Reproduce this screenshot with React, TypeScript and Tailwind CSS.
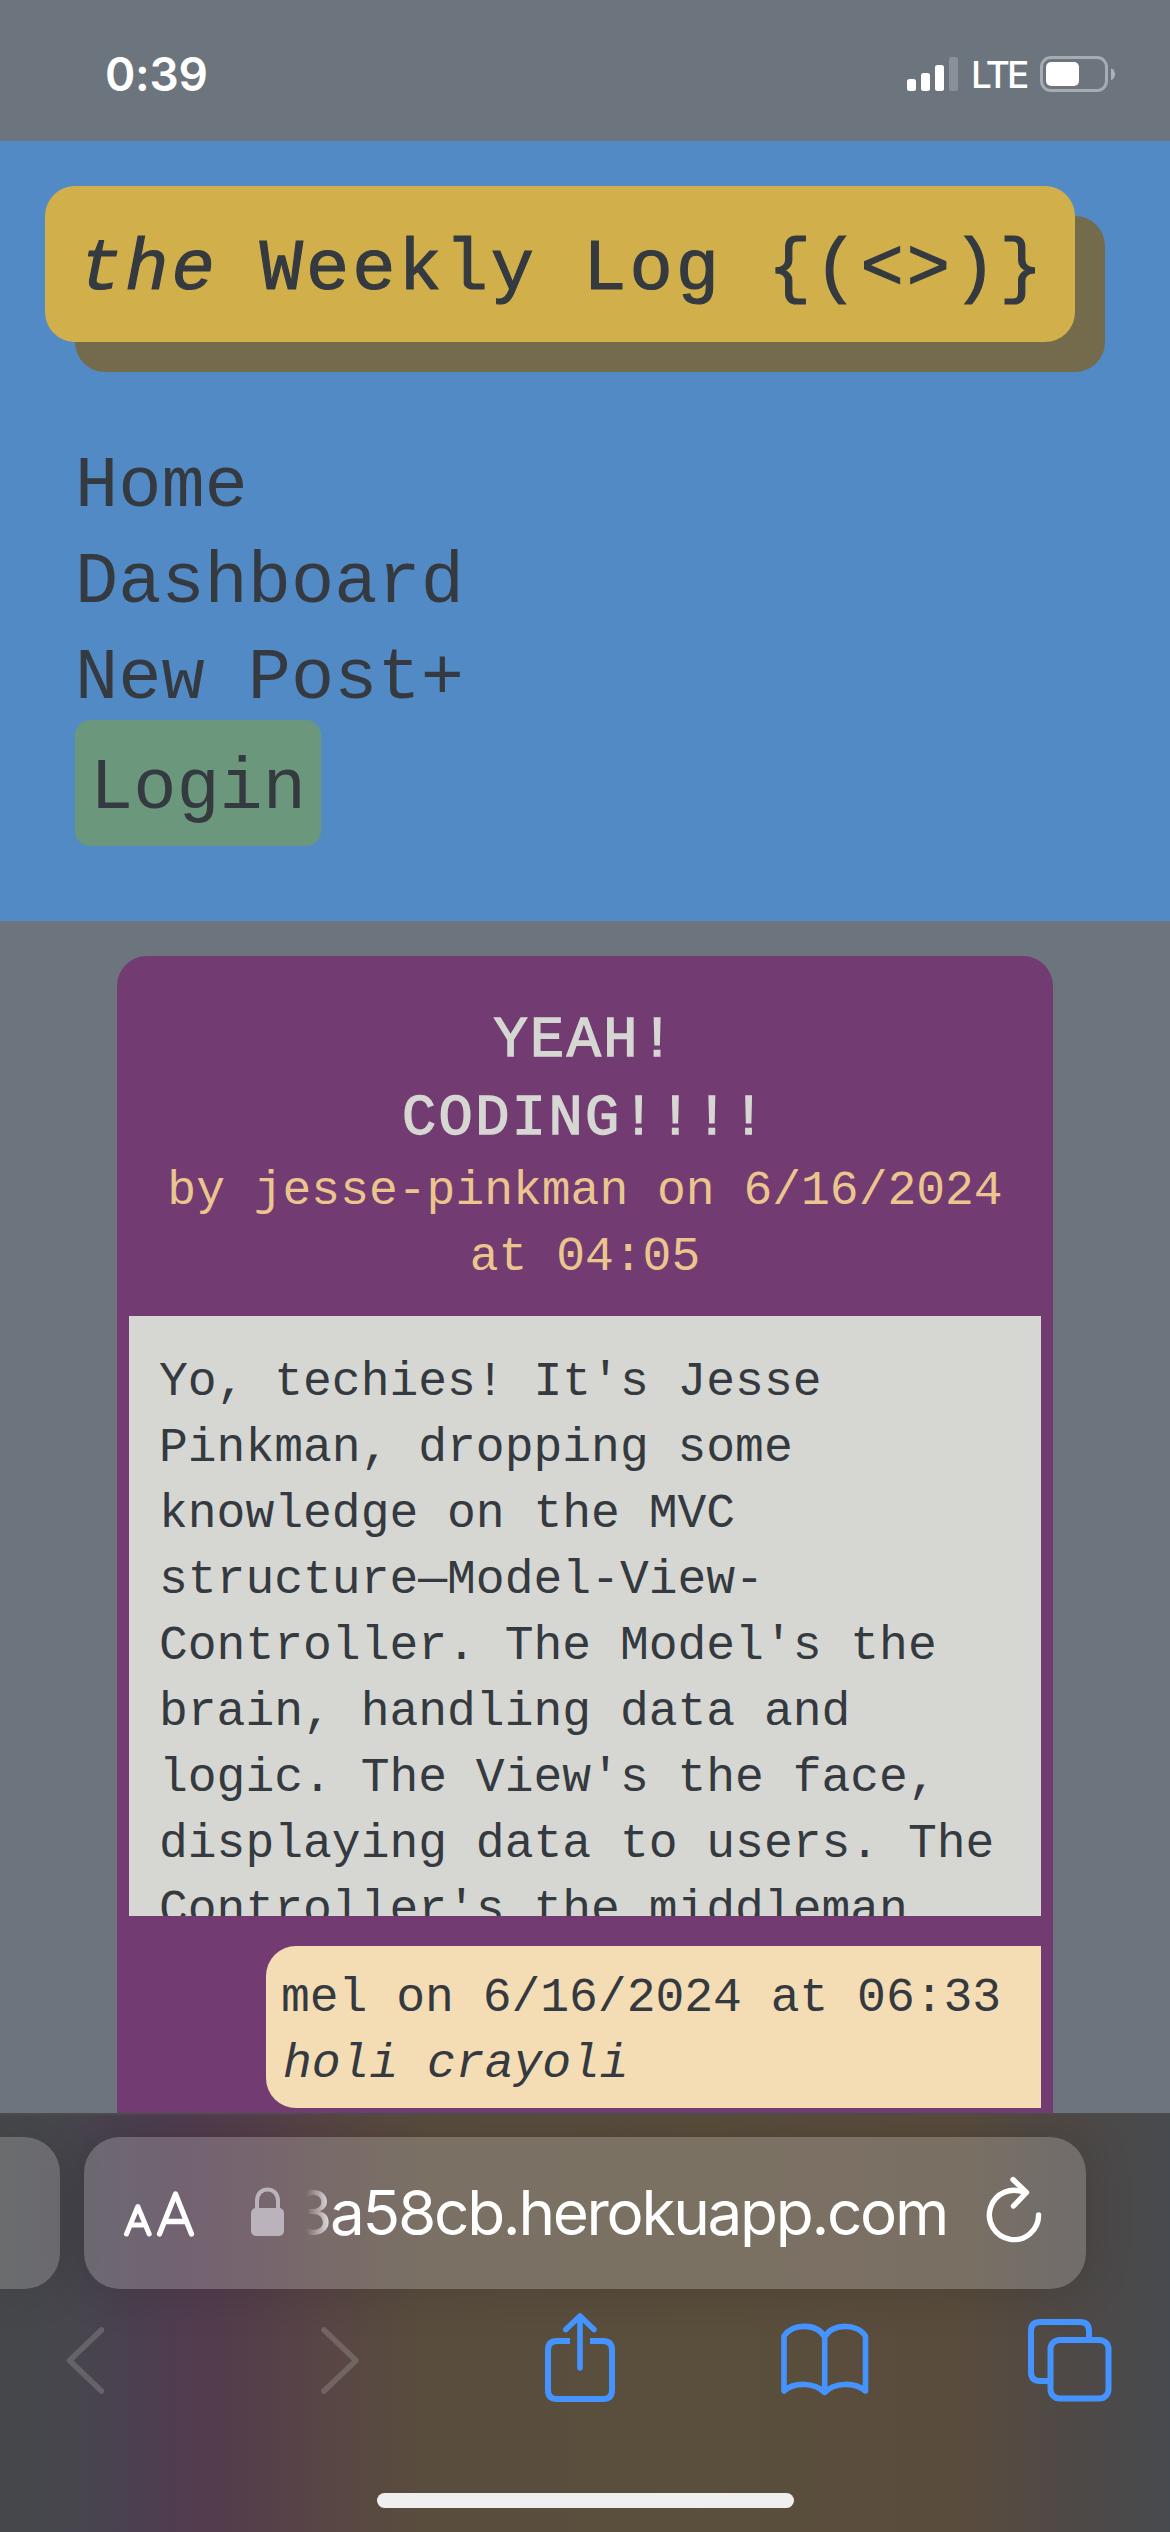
const links = ["Home", "Dashboard", "New Post+"];

function StatusBar() {
  return (
    <div className="flex h-[141px] shrink-0 items-start justify-between bg-[#6c757d] pl-[105px] pr-[54px] font-['Inter',sans-serif] text-white">
      <div className="mt-[45px] text-[46px] font-semibold leading-[58px] tracking-[-0.3px]">0:39</div>
      <div className="mt-[53px] flex items-start">
        <svg width="51" height="42" viewBox="0 0 51 42" fill="#fff">
          <rect x="0" y="26" width="9" height="12" rx="2.5" />
          <rect x="14" y="20" width="9" height="18" rx="2.5" />
          <rect x="28" y="12" width="9" height="26" rx="2.5" />
          <rect x="42" y="4" width="9" height="34" rx="2.5" fillOpacity=".2" />
        </svg>
        <div className="ml-[13px] w-[69px] text-[37px] font-medium leading-[44px] tracking-[-2.8px]">LTE</div>
        <svg width="76" height="42" viewBox="0 0 76 42">
          <rect x="1.5" y="4.5" width="65" height="33" rx="9.5" fill="none" stroke="#fff" strokeOpacity=".4" strokeWidth="3" />
          <rect x="6" y="9" width="33" height="24" rx="5" fill="#fff" />
          <path d="M71 15.500c5.300 1.500 5.300 10 0 11.500z" fill="#fff" fillOpacity=".45" />
        </svg>
      </div>
    </div>
  );
}

function SiteHeader() {
  return (
    <header className="h-[780px] shrink-0 bg-[#528ac5] pt-[45px]">
      <h1 className="ml-[45px] h-[156px] w-[1030px] whitespace-pre rounded-[30px] bg-[#d1b04c] pl-[30px] pt-[36px] text-[72px] leading-[96px] tracking-[3px] shadow-[30px_30px_0_0_#746b4d] [-webkit-text-stroke:1.2px_#343a40]">
        <em className="-mr-[4px] pl-[4px]">the</em> Weekly Log {"{(<>)}"}
      </h1>
      <nav className="ml-[75px] mt-[97px] flex flex-col items-start text-[72px] leading-[96px]">
        {links.map((label) => (
          <a key={label}>{label}</a>
        ))}
        <a className="-mt-[7px] h-[126px] rounded-[15px] bg-[#6b987c] px-[15px] pt-[21px]">Login</a>
      </nav>
    </header>
  );
}

function Post() {
  return (
    <article className="mx-[117px] mt-[35px] h-[1300px] rounded-t-[30px] bg-[#723c72] px-[12px] pt-[46px]">
      <h2 className="text-center text-[57px] leading-[78px] tracking-[2.4px] text-[#d6d7d2] [-webkit-text-stroke:1.4px_#d6d7d2]">
        YEAH!
        <br />
        CODING!!!!
      </h2>
      <p className="text-center text-[48px] leading-[66px] text-[#eac58e]">
        by jesse-pinkman on 6/16/2024
        <br />
        at 04:05
      </p>
      <div className="mt-[26px] h-[600px] overflow-hidden bg-[#d6d7d2] px-[30px] pt-[33px]">
        <p className="text-[48px] leading-[66px]">
          Yo, techies! It's Jesse
          <br />
          Pinkman, dropping some
          <br />
          knowledge on the MVC
          <br />
          structure—Model-View-
          <br />
          Controller. The Model's the
          <br />
          brain, handling data and
          <br />
          logic. The View's the face,
          <br />
          displaying data to users. The
          <br />
          Controller's the middleman
        </p>
      </div>
      <div className="ml-auto mt-[30px] h-[162px] w-[775px] rounded-l-[30px] bg-[#f4ddb4] pl-[15px] pt-[19px] text-[48px] leading-[66px]">
        <p>mel on 6/16/2024 at 06:33</p>
        <p className="pl-[2px] italic">holi crayoli</p>
      </div>
    </article>
  );
}

function BrowserBar() {
  return (
    <footer className="h-[419px] shrink-0 overflow-hidden border-t-2 border-[#4d4b4a] bg-[linear-gradient(90deg,#45484a_0%,#47464e_6%,#4c3f4f_12%,#523c4e_17%,#543e4b_21%,#584545_27%,#594d3e_36%,#5a4e3c_60%,#594c3d_82%,#4f4946_91%,#474a4e_100%)] pt-[22px] font-['Inter',sans-serif]">
      <div className="flex gap-[24px]">
        <div className="h-[152px] w-[60px] shrink-0 rounded-r-[36px] bg-white/20 shadow-[0_0_50px_rgba(0,0,0,0.12)]" />
        <div className="flex h-[152px] w-[1002px] shrink-0 items-start rounded-[36px] bg-white/20 text-white shadow-[0_0_50px_rgba(0,0,0,0.16)]">
          <svg className="ml-[36px] mt-[44px] shrink-0" width="80" height="60" viewBox="0 0 80 60" fill="none" stroke="#fff" strokeLinecap="round" strokeLinejoin="round">
            <path d="M6.500 53L17.800 25.500L29.200 53M10.500 44H25" strokeWidth="5" />
            <path d="M39.500 53L55.500 13L71.500 53M45 40.500H66" strokeWidth="5.300" />
          </svg>
          <svg className="ml-[51px] mt-[50px] shrink-0" width="33" height="50" viewBox="0 0 33 50">
            <rect x="0" y="21" width="33" height="28" rx="5" fill="#bab3bb" />
            <path d="M6 23V14C6 -1.500 27 -1.500 27 14V23" fill="none" stroke="#bab3bb" strokeWidth="4" />
          </svg>
          <div className="ml-[22px] mt-[36px] flex w-[641px] justify-end overflow-hidden whitespace-nowrap text-[62px] leading-[80px] tracking-[-2.3px] [mask-image:linear-gradient(90deg,transparent_0,black_30px)]">
            3a58cb.herokuapp.com
          </div>
          <svg className="ml-[34px] mt-[34px] shrink-0" width="70" height="80" viewBox="980 2171 70 80" fill="none" stroke="#fff" strokeWidth="5.400" strokeLinecap="round" strokeLinejoin="round">
            <path d="M1037.600 2215A24.600 24.600 0 1 1 1024 2193" />
            <path d="M1012 2179.500L1025.500 2192.500L1012.500 2206" />
          </svg>
        </div>
      </div>
      <svg className="block" width="1170" height="131" viewBox="0 2289 1170 131" fill="none" stroke="#4593ff" strokeWidth="6" strokeLinecap="round" strokeLinejoin="round">
        <g stroke="#fff" strokeOpacity=".16" strokeWidth="5.600">
          <path d="M101.400 2330L69.500 2360.500L101.400 2391" />
          <path d="M324 2330L356 2360.500L324 2391" />
        </g>
        <path d="M570 2341H557Q548 2341 548 2350V2390Q548 2399 557 2399H603Q612 2399 612 2390V2350Q612 2341 603 2341H590" strokeLinecap="butt" />
        <path d="M580 2368V2316.500M565.800 2329.500L580 2316L594 2329.500" strokeWidth="5.600" />
        <path d="M784 2391V2336C793 2323 817 2323 824.700 2337C832 2323 857 2323 865.500 2336V2391C855 2382 834 2382 824.700 2392.500C815 2382 794 2382 784 2391ZM824.700 2337V2392" strokeWidth="5.600" />
        <path d="M1089 2340V2331Q1089 2322 1080 2322H1040Q1031 2322 1031 2331V2372Q1031 2381 1040 2381H1048" strokeLinecap="butt" />
        <rect x="1050.500" y="2340" width="58" height="58.500" rx="9" />
      </svg>
      <div className="mx-auto mt-[73px] h-[15px] w-[417px] rounded-full bg-[#efefef]" />
    </footer>
  );
}

export default function App() {
  return (
    <div className="flex h-[2532px] w-[1170px] flex-col overflow-hidden bg-[#6c757d] font-['Liberation_Mono','DejaVu_Sans_Mono',monospace] text-[#343a40]">
      <StatusBar />
      <SiteHeader />
      <main className="min-h-0 flex-1 overflow-hidden">
        <Post />
      </main>
      <BrowserBar />
    </div>
  );
}
